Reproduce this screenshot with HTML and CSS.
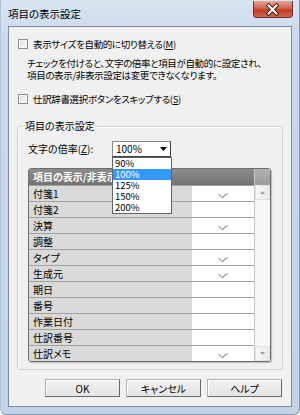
FILE: index.html
```html
<!DOCTYPE html>
<html lang="ja">
<head>
    <meta charset="UTF-8">
    <title>項目の表示設定</title>
    <link rel="stylesheet" href="styles.css">
</head>
<body>
    <div class="window">
        <div class="titlebar">
            <span class="title">項目の表示設定</span>
            <div class="close">
                <svg width="40" height="17" viewBox="0 0 40 17">
                    <path d="M16 4.5 L24 12.5 M24 4.5 L16 12.5" stroke="#4a1208" stroke-width="4" stroke-linecap="square"/>
                    <path d="M16 4.5 L24 12.5 M24 4.5 L16 12.5" stroke="#fff" stroke-width="2.2" stroke-linecap="square"/>
                </svg>
            </div>
        </div>

        <div class="client">
            <label class="check-row row-auto">
                <span class="box"></span>
                <span>表示サイズを自動的に切り替える(<u>M</u>)</span>
            </label>
            <p class="note">チェックを付けると、文字の倍率と項目が自動的に設定され、<br>項目の表示/非表示設定は変更できなくなります。</p>
            <label class="check-row row-skip">
                <span class="box"></span>
                <span>仕訳辞書選択ボタンをスキップする(<u>S</u>)</span>
            </label>

            <fieldset class="group">
                <legend>項目の表示設定</legend>
                <div class="zoom-row">
                    <span class="zoom-label">文字の倍率(<u>Z</u>):</span>
                    <div class="combo">
                        <span class="combo-value">100%</span>
                        <span class="combo-btn">
                            <svg width="7" height="4" viewBox="0 0 7 4"><path d="M0 0 H7 L3.5 4 Z" fill="#000"/></svg>
                        </span>
                        <!-- open dropdown -->
                        <ul class="combo-list">
                            <li>90%</li>
                            <li class="selected">100%</li>
                            <li>125%</li>
                            <li>150%</li>
                            <li>200%</li>
                        </ul>
                    </div>
                </div>

                <div class="grid">
                    <div class="grid-body">
                        <div class="grid-head">項目の表示/非表示</div>
                        <div class="grid-row"><span class="name">付箋1</span><span class="mark"><svg width="10" height="6" viewBox="0 0 10 6"><polyline points="0.5,1 4,4.5 9.5,0.5" fill="none" stroke="#666" stroke-width="1"/></svg></span></div>
                        <div class="grid-row"><span class="name">付箋2</span><span class="mark"></span></div>
                        <div class="grid-row"><span class="name">決算</span><span class="mark"><svg width="10" height="6" viewBox="0 0 10 6"><polyline points="0.5,1 4,4.5 9.5,0.5" fill="none" stroke="#666" stroke-width="1"/></svg></span></div>
                        <div class="grid-row"><span class="name">調整</span><span class="mark"></span></div>
                        <div class="grid-row"><span class="name">タイプ</span><span class="mark"><svg width="10" height="6" viewBox="0 0 10 6"><polyline points="0.5,1 4,4.5 9.5,0.5" fill="none" stroke="#666" stroke-width="1"/></svg></span></div>
                        <div class="grid-row"><span class="name">生成元</span><span class="mark"><svg width="10" height="6" viewBox="0 0 10 6"><polyline points="0.5,1 4,4.5 9.5,0.5" fill="none" stroke="#666" stroke-width="1"/></svg></span></div>
                        <div class="grid-row"><span class="name">期日</span><span class="mark"></span></div>
                        <div class="grid-row"><span class="name">番号</span><span class="mark"></span></div>
                        <div class="grid-row"><span class="name">作業日付</span><span class="mark"></span></div>
                        <div class="grid-row"><span class="name">仕訳番号</span><span class="mark"></span></div>
                        <div class="grid-row"><span class="name">仕訳メモ</span><span class="mark"><svg width="10" height="6" viewBox="0 0 10 6"><polyline points="0.5,1 4,4.5 9.5,0.5" fill="none" stroke="#666" stroke-width="1"/></svg></span></div>
                    </div>
                    <div class="scrollbar">
                        <div class="sb-corner"></div>
                        <div class="sb-btn">
                            <svg width="5" height="3" viewBox="0 0 5 3"><path d="M0 3 H5 L2.5 0 Z" fill="#a0a0a0"/></svg>
                        </div>
                        <div class="sb-track"></div>
                        <div class="sb-btn">
                            <svg width="5" height="3" viewBox="0 0 5 3"><path d="M0 0 H5 L2.5 3 Z" fill="#a0a0a0"/></svg>
                        </div>
                    </div>
                </div>
            </fieldset>

            <div class="buttons">
                <button type="button">OK</button>
                <button type="button">キャンセル</button>
                <button type="button">ヘルプ</button>
            </div>
        </div>
    </div>
</body>
</html>
```

FILE: styles.css
```css
body {
    margin: 0;
    font-family: "Noto Sans CJK JP", sans-serif;
    font-size: 10px;
    font-feature-settings: "palt";
    color: #000;
}
.window {
    width: 300px;
    height: 415px;
    box-sizing: border-box;
    padding: 0 7px 7px 7px;
    background: linear-gradient(#dae5f2, #c9d8ea 40px, #c3d3e7);
    border: 1px solid #8396ae;
    border-top: none;
    border-left-color: #b3c4d8;
    border-radius: 0 0 6px 6px;
    display: flex;
    flex-direction: column;
}
.titlebar {
    height: 26px;
    display: flex;
    align-items: center;
}
.title {
    font-size: 10.5px;
    line-height: 12px;
    margin-top: 1px;
}
.close {
    margin-left: auto;
    margin-right: -1px;
    align-self: flex-start;
    margin-top: 1px;
    width: 40px;
    height: 17px;
    border: 1px solid #7a2a20;
    border-top: none;
    box-sizing: border-box;
    border-radius: 0 0 4px 4px;
    background: linear-gradient(#e6a597, #cf6652 45%, #c03c23 55%, #d2664f);
    display: flex;
}
.close svg {
    margin-left: -1px;
}
.client {
    height: 381px;
    box-sizing: border-box;
    background: #f0f0f0;
    border: 1px solid #7c8ea5;
    padding-top: 10px;
    display: flex;
    flex-direction: column;
}
.check-row {
    height: 14px;
    display: flex;
    align-items: center;
    gap: 5px;
    padding-left: 9px;
    line-height: 12px;
    font-size: 9.5px;
    letter-spacing: -0.35px;
    white-space: nowrap;
}
.box {
    width: 10px;
    height: 10px;
    box-sizing: border-box;
    border: 1px solid #8e8f8f;
    background: linear-gradient(135deg, #dedede, #fcfcfc);
    box-shadow: inset 0 0 0 1px #f4f4f4;
}
.note {
    margin: 6px 0 0 18px;
    line-height: 12px;
    font-size: 9.5px;
    letter-spacing: -0.35px;
    white-space: nowrap;
}
.row-skip {
    margin-top: 11px;
}
.group {
    margin: 14px 8px 0 8px;
    padding: 0 11px 7px 10px;
    border: 1px solid #d2d2d2;
    border-radius: 3px;
    box-shadow: inset 1px 1px 0 #fff;
}
.group legend {
    margin-left: -5px;
    padding: 0 2px;
    line-height: 12px;
}
.zoom-row {
    margin-top: 9px;
    height: 16px;
    display: flex;
    align-items: center;
}
.zoom-label {
    width: 84px;
    line-height: 12px;
}
.combo {
    position: relative;
    width: 59px;
    height: 16px;
    box-sizing: border-box;
    border: 1px solid #8a8a8a;
    border-right-color: #404040;
    border-bottom-color: #404040;
    background: #fff;
    display: flex;
    align-items: center;
}
.combo-value {
    padding-left: 3px;
    line-height: 12px;
    flex: 1;
}
.combo-btn {
    width: 14px;
    height: 14px;
    display: flex;
    align-items: center;
    justify-content: center;
}
.combo-list {
    position: absolute;
    top: 15px;
    left: -1px;
    width: 60px;
    box-sizing: border-box;
    margin: 0;
    padding: 0;
    list-style: none;
    background: #fff;
    border: 1px solid #646464;
    z-index: 2;
}
.combo-list li {
    height: 11px;
    line-height: 11px;
    padding-left: 2px;
    font-size: 9.5px;
}
.combo-list .selected {
    background: #3399ff;
    color: #fff;
}
.grid {
    margin-top: 11px;
    height: 194px;
    box-sizing: border-box;
    border: 1px solid #6e6e6e;
    border-radius: 3px;
    box-shadow: 1px 1px 1px #b8b8b8;
    overflow: hidden;
    display: flex;
}
.grid-body {
    flex: 1;
}
.grid-head {
    height: 16px;
    line-height: 16px;
    padding-left: 4px;
    background: linear-gradient(#8c8c8c, #737373);
    color: #fff;
    font-weight: bold;
}
.grid-row {
    display: flex;
    height: 15px;
    border-top: 1px solid #a2a2a2;
}
.name {
    width: 159px;
    padding-left: 4px;
    background: #d9d9d9;
    line-height: 15px;
}
.mark {
    flex: 1;
    background: #fff;
    display: flex;
    justify-content: center;
    align-items: flex-end;
    padding-bottom: 2px;
}
.scrollbar {
    width: 15px;
    display: flex;
    flex-direction: column;
    background: #f3f3f3;
    border-left: 1px solid #c8c8c8;
}
.sb-corner {
    height: 16px;
    background: linear-gradient(#b0b0b0, #9c9c9c);
}
.sb-btn {
    height: 15px;
    box-sizing: border-box;
    border: 1px solid #e2e2e2;
    background: linear-gradient(to right, #f7f7f7, #e9e9e9);
    display: flex;
    align-items: center;
    justify-content: center;
}
.sb-track {
    flex: 1;
    background: #f7f7f7;
}
.buttons {
    margin-top: 9px;
    padding-right: 9px;
    display: flex;
    justify-content: flex-end;
    gap: 6px;
}
button {
    width: 75px;
    height: 18px;
    padding: 0;
    font-family: inherit;
    font-size: 10px;
    font-feature-settings: "palt";
    border: 1px solid #b4b4b4;
    border-right-color: #6a6a6a;
    border-bottom-color: #6a6a6a;
    background: linear-gradient(#f2f2f2, #e4e4e4);
    box-shadow: inset 1px 1px 0 #fff;
    color: #000;
}
```
